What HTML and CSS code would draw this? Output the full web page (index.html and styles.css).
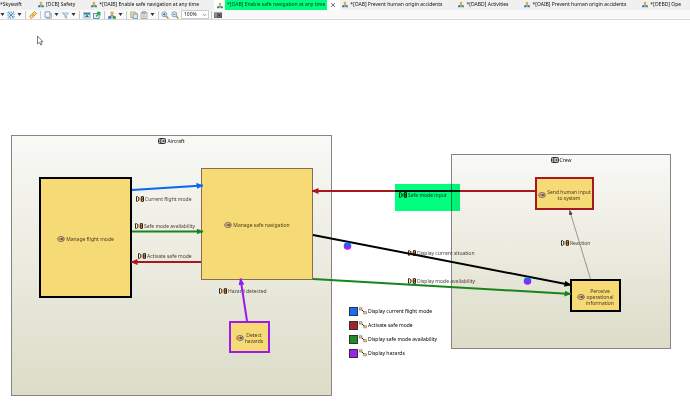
FILE: index.html
```html
<!DOCTYPE html>
<html lang="en">
<head>
<meta charset="utf-8">
<title>Enable safe navigation at any time</title>
<link rel="stylesheet" href="styles.css">
</head>
<body>
<svg class="defs" aria-hidden="true">
  <symbol id="tree" viewBox="0 0 8 8"><path d="M4 3v2M2 6V5h4v1" fill="none" stroke="#777"/><circle cx="4" cy="2" r="1.700" fill="#e8a83a"/><path d="M0 7.800V6l1-1h1.500l1 1v1.800z" fill="#3478bd"/><path d="M4.500 7.800V6l1-1H7l1 1v1.800z" fill="#3b9a4d"/></symbol>
  <symbol id="exchange" viewBox="0 0 8 6"><path d="M.5.7h1l1.300 1v2.600l-1.300 1h-1z" fill="#fff" stroke="#111" stroke-width=".9"/><path d="M7.500.7H5.300v4.600h2.200z" fill="#f2a53c" stroke="#111" stroke-width=".9"/><path d="M5.500 3h2" stroke="#111" stroke-width=".8"/><path d="M3 1.200 5.200 3 3 4.800z" fill="#f08a1c"/></symbol>
  <symbol id="activity" viewBox="0 0 8 6"><ellipse cx="4" cy="3" rx="3.400" ry="2.500" fill="#fbe7b4" stroke="#555" stroke-width=".8"/><path d="M1.300 1.600h2.200v2.800H1.300z" fill="#e8812b"/><path d="M4.300 1.600v2.800M5.900 1.600v2.800M3.500 3h2.400" stroke="#333" stroke-width=".8"/></symbol>
  <symbol id="entity" viewBox="0 0 8 6"><rect x=".5" y=".5" width="7" height="5" rx="1" fill="#ccd2da" stroke="#333"/><path d="M3.500 1.700H2v2.600h1.500M2 3h1.300M4.500 1.700l2 2.600M6.500 1.700l-2 2.600" fill="none" stroke="#222" stroke-width=".7"/></symbol>
  <symbol id="chain" viewBox="0 0 8 8"><path d="M2 2.200 6 5.800" stroke="#222"/><rect x=".6" y=".8" width="2.400" height="2.200" fill="#f3c76b" stroke="#777" stroke-width=".6"/><rect x="4.800" y="4.700" width="2.600" height="2.200" fill="#f3c76b" stroke="#777" stroke-width=".6"/></symbol>
  <symbol id="select-all" viewBox="0 0 8 8"><rect x="1" y="1" width="6" height="6" fill="#d5e6f5" stroke="#6a9cc4" stroke-dasharray="1.500 1"/><path d="m2 2 4 4M6 2 2 6" stroke="#4f8fc2"/></symbol>
  <symbol id="link" viewBox="0 0 8 8"><path d="M.6 5.500 2.800 3.300 4.700 5.200 2.500 7.400zM3.300 2.800 5.500.6 7.400 2.500 5.200 4.700z" fill="#ffd98a" stroke="#d48a1c"/></symbol>
  <symbol id="layers" viewBox="0 0 8 8"><path d="M2.500 2.500v5h5v-5z" fill="#e6edf2" stroke="#9fb3c2" stroke-width=".8"/><path d="M1 .8h5v5.500H1z" fill="#f5f9fc" stroke="#5d8fb4" stroke-width=".8"/></symbol>
  <symbol id="filter" viewBox="0 0 8 8"><path d="M2 2h5.500L5.500 4.500v3L4 6.500v-2z" fill="#d8e7f2" stroke="#8fb0c9" stroke-width=".8"/><path d="m.5.8 5 5.500" stroke="#8aaabd" stroke-width=".8"/></symbol>
  <symbol id="pin" viewBox="0 0 8 8"><rect x=".8" y="1.500" width="6.400" height="5.500" fill="#d3e6f3" stroke="#8ba9bc" stroke-width=".7"/><path d="M1 2h6v1.500H1z" fill="#3279b5"/><path d="m2 6 2-2.500L6 6z" fill="#287d48"/></symbol>
  <symbol id="export" viewBox="0 0 8 8"><rect x=".6" y="2.500" width="5.500" height="5" fill="#e4f0f7" stroke="#397bad" stroke-width=".8"/><path d="m2.500 5 3-3H4V.8h3.500v3.500H6.300V3l-2.800 3z" fill="#31a34c"/></symbol>
  <symbol id="copy" viewBox="0 0 8 8"><path d="M.8 1h4.500l1 1v4.500H.8z" fill="#f7e4b7" stroke="#a2834a" stroke-width=".7"/><path d="M3 3h4.500v4.500H3z" fill="#d9e9f4" stroke="#5487ac" stroke-width=".7"/></symbol>
  <symbol id="paste" viewBox="0 0 8 8"><path d="M1 1.500h6v6H1z" fill="#eee" stroke="#999" stroke-width=".8"/><path d="M2.500.5h3v2h-3zM2.500 4h3M2.500 5.700h3" fill="#bbb" stroke="#999" stroke-width=".7"/></symbol>
  <symbol id="zoom-in" viewBox="0 0 8 8"><path d="m5 5 2.500 2.500" stroke="#b8833d" stroke-width="1.300"/><circle cx="3.300" cy="3.300" r="2.500" fill="#eaf4fb" stroke="#6b8ba5" stroke-width=".8"/><path d="M2 3.300h2.600M3.300 2v2.600" stroke="#235b89" stroke-width=".8"/></symbol>
  <symbol id="zoom-out" viewBox="0 0 8 8"><path d="m5 5 2.500 2.500" stroke="#b8833d" stroke-width="1.300"/><circle cx="3.300" cy="3.300" r="2.500" fill="#eaf4fb" stroke="#6b8ba5" stroke-width=".8"/><path d="M2 3.300h2.600" stroke="#235b89" stroke-width=".8"/></symbol>
  <symbol id="camera" viewBox="0 0 8 8"><path d="M0 1.500h8v5.500H0z" fill="#555"/><path d="M1 2v4.500M2.200 2v4.500" stroke="#ddd" stroke-width=".6"/><circle cx="5.200" cy="4.200" r="1.500" fill="#333" stroke="#aaa" stroke-width=".5"/></symbol>
</svg>

<nav class="tabs" aria-label="Open diagrams">
  <a class="tab" href="#">*Skyswift</a>
  <a class="tab" href="#"><svg class="tab-icon"><use href="#tree"/></svg>[OCB] Safety</a>
  <a class="tab" href="#"><svg class="tab-icon"><use href="#tree"/></svg>*[OAIB] Enable safe navigation at any time</a>
  <div class="tab active"><a class="tab" href="#" aria-current="page"><svg class="tab-icon"><use href="#tree"/></svg><mark>*[OAB] Enable safe navigation at any time</mark></a><button class="close" aria-label="Close tab"><svg viewBox="0 0 6 6"><path d="m1 1 4 4M5 1 1 5" stroke="#555" stroke-width=".8"/></svg></button></div>
  <a class="tab" href="#"><svg class="tab-icon"><use href="#tree"/></svg>*[OAB] Prevent human origin accidents</a>
  <a class="tab" href="#"><svg class="tab-icon"><use href="#tree"/></svg>*[OABD] Activities</a>
  <a class="tab" href="#"><svg class="tab-icon"><use href="#tree"/></svg>*[OAIB] Prevent human origin accidents</a>
  <a class="tab" href="#"><svg class="tab-icon"><use href="#tree"/></svg>*[OEBD] Ope</a>
</nav>

<div class="toolbar" role="toolbar" aria-label="Diagram tools">
  <div class="group"><button class="drop" aria-label="Arrange options"></button><button aria-label="Select all"><svg><use href="#select-all"/></svg></button><button class="drop" aria-label="Select options"></button></div>
  <div class="group"><button aria-label="Link"><svg><use href="#link"/></svg></button></div>
  <div class="group"><button aria-label="Layers"><svg><use href="#layers"/></svg></button><button class="drop" aria-label="Layer options"></button><button aria-label="Filters"><svg><use href="#filter"/></svg></button><button class="drop" aria-label="Filter options"></button></div>
  <div class="group"><button aria-label="Pin"><svg><use href="#pin"/></svg></button><button aria-label="Export"><svg><use href="#export"/></svg></button></div>
  <div class="group"><button aria-label="Diagrams"><svg><use href="#tree"/></svg></button><button class="drop" aria-label="Diagram options"></button></div>
  <div class="group"><button aria-label="Copy layout"><svg><use href="#copy"/></svg></button><button aria-label="Paste layout"><svg><use href="#paste"/></svg></button><button class="drop" aria-label="Paste options"></button></div>
  <div class="group tight"><button aria-label="Zoom in"><svg><use href="#zoom-in"/></svg></button><button aria-label="Zoom out"><svg><use href="#zoom-out"/></svg></button><span class="zoom"><select aria-label="Zoom level"><option>100%</option></select><svg viewBox="0 0 5 4"><path d="m.8 1 1.700 1.800L4.200 1" fill="none" stroke="#777" stroke-width=".8"/></svg></span></div>
  <div class="group tight"><button aria-label="Export as image"><svg><use href="#camera"/></svg></button></div>
</div>

<main class="canvas">
  <section class="entity aircraft"><h2><svg class="badge"><use href="#entity"/></svg>Aircraft</h2></section>
  <section class="entity crew"><h2><svg class="badge"><use href="#entity"/></svg>Crew</h2></section>

  <div class="node flight"><svg class="badge"><use href="#activity"/></svg><span>Manage flight mode</span></div>
  <div class="node navigation"><svg class="badge"><use href="#activity"/></svg><span>Manage safe navigation</span></div>
  <div class="node detect"><svg class="badge"><use href="#activity"/></svg><span>Detect<br>hazards</span></div>
  <div class="node send"><svg class="badge"><use href="#activity"/></svg><span>Send human input<br>to system</span></div>
  <div class="node perceive"><svg class="badge"><use href="#activity"/></svg><span>Perceive<br>operational<br>information</span></div>

  <div class="label l-current"><svg><use href="#exchange"/></svg>Current flight mode</div>
  <div class="label l-safe"><svg><use href="#exchange"/></svg>Safe mode availability</div>
  <div class="label l-activate"><svg><use href="#exchange"/></svg>Activate safe mode</div>
  <div class="label l-hazard"><svg><use href="#exchange"/></svg>Hazard detected</div>
  <div class="label l-input"><svg><use href="#exchange"/></svg>Safe mode input</div>
  <div class="label l-situation"><svg><use href="#exchange"/></svg>Display current situation</div>
  <div class="label l-display"><svg><use href="#exchange"/></svg>Display mode availability</div>
  <div class="label l-reaction"><svg><use href="#exchange"/></svg>Reaction</div>

  <svg class="edges" viewBox="0 20 690 383" width="690" height="383" aria-hidden="true">
    <defs>
      <marker id="head" viewBox="0 0 7 6" refX="6.500" refY="3" markerWidth="7" markerHeight="6" markerUnits="userSpaceOnUse" orient="auto"><path d="M0 0 7 3 0 6z" fill="context-stroke"/></marker>
      <marker id="small-head" viewBox="0 0 5 4" refX="5" refY="2" markerWidth="5" markerHeight="4" markerUnits="userSpaceOnUse" orient="auto"><path d="M0 0 5 2 0 4z" fill="#4b4038"/></marker>
    </defs>
    <g fill="none" stroke-width="2">
      <path d="M132 190 203 185.500" stroke="#0a66f5" marker-end="url(#head)"/>
      <path d="M132 231.500H203" stroke="#17851c" marker-end="url(#head)"/>
      <path d="M201 262H131" stroke="#a6171f" marker-end="url(#head)"/>
      <path d="M535 191H312" stroke="#a6171f" marker-end="url(#head)"/>
      <path d="M313 235 571 285" stroke="#000" marker-end="url(#head)"/>
      <path d="M313 279 571 294" stroke="#17851c" marker-end="url(#head)"/>
      <path d="M247 321 240.500 278.500" stroke="#9a1bee" marker-end="url(#head)"/>
    </g>
    <path d="M590.500 279 569.500 210" stroke="#8b7c70" stroke-width=".8" marker-end="url(#small-head)"/>
    <path d="M343.700 246a3.800 3.800 0 0 1 7.600 0z" fill="#146cf7"/><path d="M343.700 246a3.800 3.800 0 0 0 7.600 0z" fill="#a020f0"/>
    <path d="M523.700 281a3.800 3.800 0 0 1 7.600 0z" fill="#146cf7"/><path d="M523.700 281a3.800 3.800 0 0 0 7.600 0z" fill="#a020f0"/>
    <path d="M37.500 36v8l2-1.700 1.300 2.700 1.200-.6-1.300-2.600H43z" fill="#fff" stroke="#444" stroke-width=".7"/>
  </svg>
  <div class="highlight"></div>

  <ul class="legend">
    <li><i class="swatch blue"></i><svg><use href="#chain"/></svg>Display current flight mode</li>
    <li><i class="swatch red"></i><svg><use href="#chain"/></svg>Activate safe mode</li>
    <li><i class="swatch green"></i><svg><use href="#chain"/></svg>Display safe mode availability</li>
    <li><i class="swatch purple"></i><svg><use href="#chain"/></svg>Display hazards</li>
  </ul>
</main>
</body>
</html>
```
FILE: styles.css
```css
* { box-sizing: border-box; }

body {
  margin: 0;
  min-height: 100vh;
  display: flex;
  flex-direction: column;
  overflow: hidden;
  background: #fff;
  color: #111;
  font: 5px/8px "Noto Sans", "Open Sans", sans-serif;
}

svg { display: block; flex: none; }
.defs { position: absolute; width: 0; height: 0; }

button {
  padding: 0;
  border: 0;
  background: none;
}

/* Editor tabs */
.tabs {
  display: flex;
  gap: 16px;
  height: 10px;
  overflow: hidden;
  background: #f0f0f0;
}
.tab {
  display: flex;
  align-items: center;
  gap: 2px;
  flex: none;
  height: 8px;
  color: #111;
  text-decoration: none;
  white-space: nowrap;
}
.tab-icon { width: 6px; height: 7px; }
.active {
  gap: 3px;
  height: 10px;
  margin: 0 -14px 0 -1px;
  padding: 0 4px 0 3px;
  background: #fff;
}
.active mark {
  height: 10px;
  padding: 0 2px;
  background: #00ff7f;
  color: #032;
}
.close, .close svg { width: 6px; height: 6px; }

/* Toolbar */
.toolbar {
  display: flex;
  align-items: center;
  height: 10px;
  background: #f9f9f9;
  border-bottom: 1px solid #d8d8d8;
}
.group {
  display: flex;
  align-items: center;
  gap: 2px;
  height: 8px;
  padding: 0 3px;
  border-right: 1px solid #c8c8c8;
}
.group:first-child { padding-left: 0; }
.group:last-child { border: 0; }
.group.tight { padding: 0 2px; }
.toolbar button svg { width: 8px; height: 8px; }
.toolbar .drop {
  width: 5px;
  height: 3px;
  background: #333;
  clip-path: polygon(10% 0, 90% 0, 50% 100%);
}
.zoom {
  display: grid;
  grid-template-columns: 1fr 7px;
  align-items: center;
  width: 28px;
}
.zoom select {
  grid-area: 1 / 1 / 2 / 3;
  height: 9px;
  padding: 0 2px;
  border: 1px solid #ccc;
  appearance: none;
  background: #fff;
  color: #111;
  font: inherit;
  line-height: 7px;
}
.zoom svg {
  grid-area: 1 / 2;
  z-index: 1;
  width: 5px;
  height: 4px;
  pointer-events: none;
}

/* Diagram canvas */
.canvas {
  position: relative;
  flex: 1;
}
.entity, .node, .label, .highlight, .legend, .edges { position: absolute; }
.entity {
  border: 1px solid #858585;
  background: linear-gradient(#f9f9f6, #dcdcc8);
}
.entity h2 {
  display: flex;
  align-items: center;
  justify-content: center;
  gap: 1px;
  margin: 1px 0 0;
  font: inherit;
}
.badge { width: 8px; height: 6px; }
.aircraft { left: 11px; top: 115px; width: 321px; height: 261px; }
.crew { left: 451px; top: 134px; width: 220px; height: 195px; }

.node {
  display: flex;
  align-items: center;
  justify-content: center;
  gap: 1px;
  padding-top: 2px;
  border: 2px solid #000;
  background: #f6da76;
  color: #4a3820;
  line-height: 6px;
  text-align: center;
  white-space: nowrap;
}
.flight { left: 39px; top: 157px; width: 93px; height: 121px; }
.navigation { left: 201px; top: 148px; width: 112px; height: 112px; border: 1px solid #8a6d50; }
.detect { left: 229px; top: 301px; width: 41px; height: 32px; border-color: #9a1bee; }
.send { left: 535px; top: 157px; width: 59px; height: 33px; border-color: #a6171f; }
.perceive { left: 570px; top: 259px; width: 51px; height: 33px; }

.label {
  display: flex;
  align-items: center;
  gap: 1px;
  color: #4a3c34;
  white-space: nowrap;
}
.label svg { width: 8px; height: 6px; }
.l-current { left: 136px; top: 175px; }
.l-safe { left: 135px; top: 202px; }
.l-activate { left: 138px; top: 232px; }
.l-hazard { left: 219px; top: 267px; }
.l-input { left: 399px; top: 171px; }
.l-situation { left: 408px; top: 229px; }
.l-display { left: 408px; top: 257px; }
.l-reaction { left: 561px; top: 219px; }

.edges { left: 0; top: 0; pointer-events: none; }
.highlight {
  left: 395px;
  top: 164px;
  width: 65px;
  height: 27px;
  background: #00ff7f;
  mix-blend-mode: multiply;
}

.legend {
  left: 349px;
  top: 286px;
  display: grid;
  gap: 4px;
  margin: 0;
  padding: 0;
  list-style: none;
  color: #000;
}
.legend li { display: flex; align-items: center; gap: 1px; height: 10px; }
.legend svg { width: 8px; height: 8px; }
.swatch { width: 9px; height: 9px; border: 1px solid #333; }
.blue { background: #146cf7; }
.red { background: #a52228; }
.green { background: #1f8c24; }
.purple { background: #a020f0; }
```
